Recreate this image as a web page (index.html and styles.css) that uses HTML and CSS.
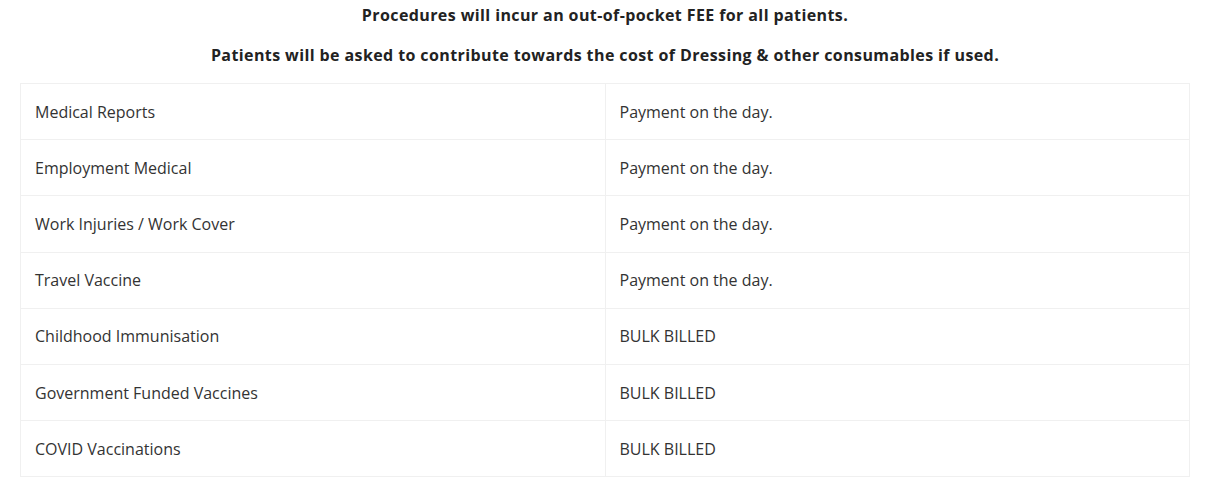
FILE: index.html
```html
<!DOCTYPE html>
<html lang="en">
<head>
<meta charset="utf-8">
<title>Fees</title>
<link rel="stylesheet" href="styles.css">
</head>
<body>
<div class="page">
  <p class="note">Procedures will incur an out-of-pocket FEE for all patients.</p>
  <p class="note">Patients will be asked to contribute towards the cost of Dressing &amp; other consumables if used.</p>
  <table class="fees">
    <tbody>
      <tr><td>Medical Reports</td><td>Payment on the day.</td></tr>
      <tr><td>Employment Medical</td><td>Payment on the day.</td></tr>
      <tr><td>Work Injuries / Work Cover</td><td>Payment on the day.</td></tr>
      <tr><td>Travel Vaccine</td><td>Payment on the day.</td></tr>
      <tr><td>Childhood Immunisation</td><td>BULK BILLED</td></tr>
      <tr><td>Government Funded Vaccines</td><td>BULK BILLED</td></tr>
      <tr><td>COVID Vaccinations</td><td>BULK BILLED</td></tr>
    </tbody>
  </table>
</div>
</body>
</html>
```

FILE: styles.css
```css
html, body {
  margin: 0;
  padding: 0;
  background: #ffffff;
}

.page {
  padding: 4px 22px 0 20px;
  font-family: "Open Sans", "Liberation Sans", sans-serif;
  color: #333333;
}

.note {
  margin: 0 0 18px;
  text-align: center;
  font-weight: 700;
  font-size: 16px;
  letter-spacing: 0.4px;
  line-height: 22px;
  color: #222222;
}

.note + .note {
  margin-bottom: 17px;
}

.fees {
  width: 100%;
  border-collapse: collapse;
  table-layout: fixed;
  font-size: 16px;
  line-height: 24px;
}

.fees td {
  border: 1px solid #f0f0f0;
  padding: 15.6px 14px;
  color: #333333;
}
```
